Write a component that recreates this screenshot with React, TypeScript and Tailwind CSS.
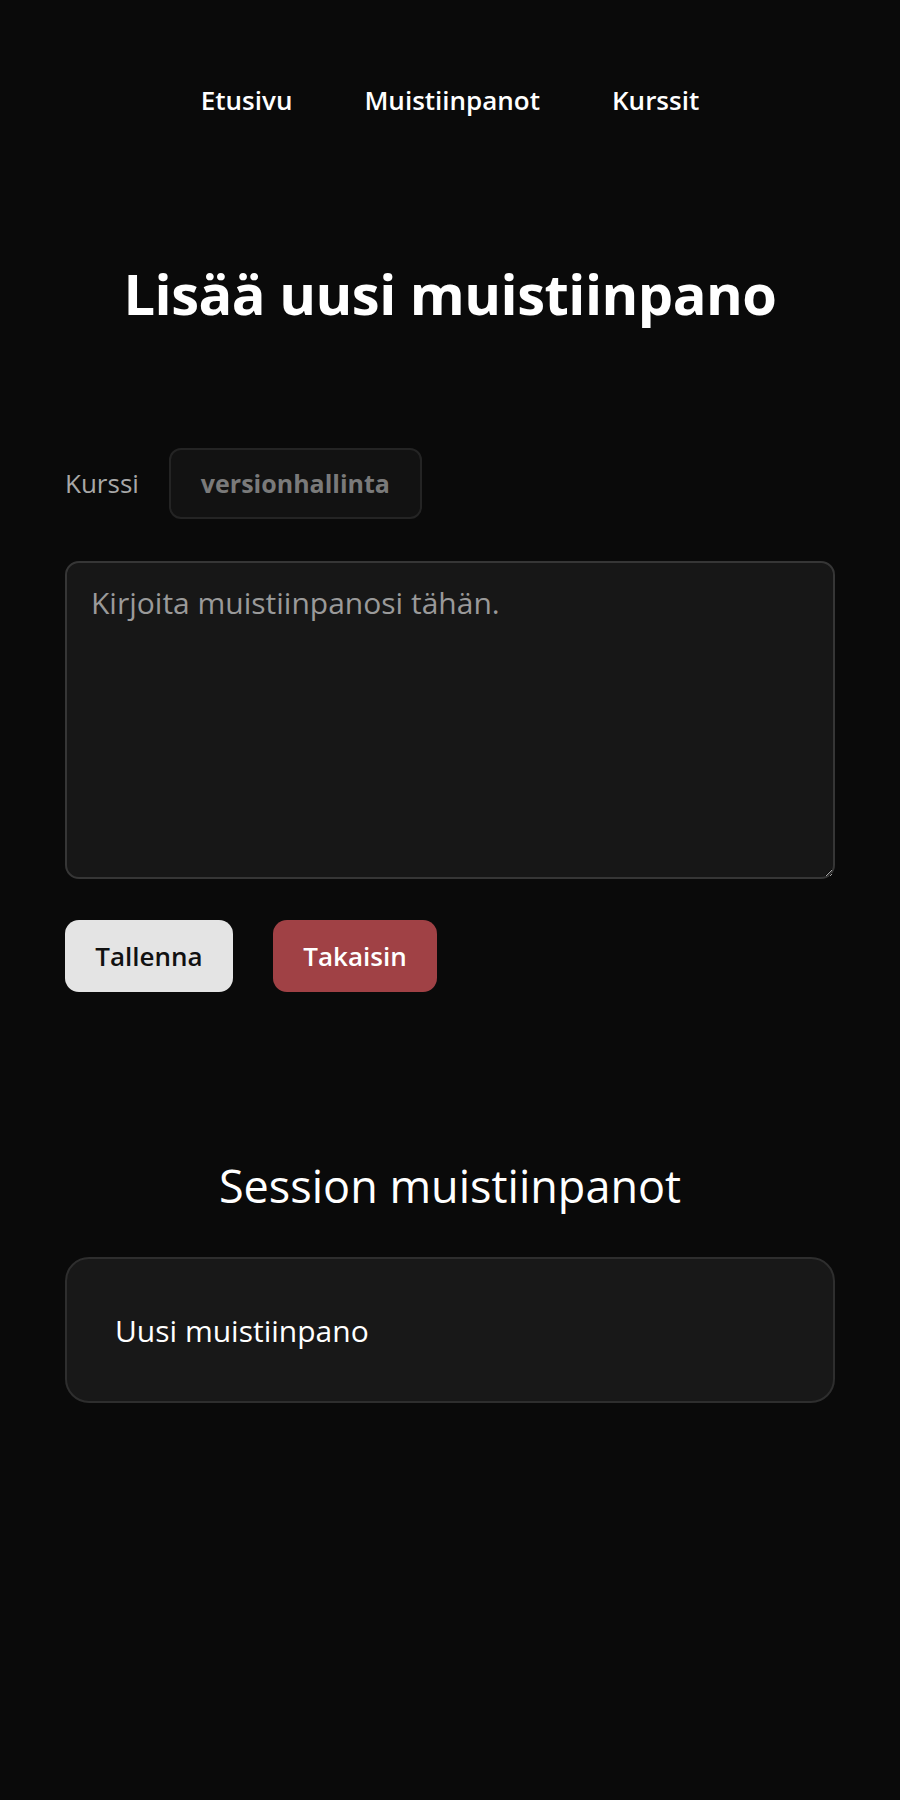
import type { FC } from 'react';

const navLinks = ['Etusivu', 'Muistiinpanot', 'Kurssit'];

const sessionNotes = ['Uusi muistiinpano'];

const App: FC = () => {
  return (
    <div className="min-h-[1800px] bg-[#0a0a0a] text-white font-['Open_Sans',sans-serif]">
      <nav className="flex justify-center gap-[72px] pt-[80px]">
        {navLinks.map((link) => (
          <a key={link} href="#" className="text-[26px] leading-[40px] font-semibold text-white">
            {link}
          </a>
        ))}
      </nav>

      <main className="mx-auto w-[770px]">
        <h1 className="mt-[137px] text-center text-[56px] leading-[72px] font-bold tracking-[-0.5px]">
          Lisää uusi muistiinpano
        </h1>

        <div className="mt-[119px] flex items-center gap-[30px]">
          <span className="text-[26px] text-[#a8a8a8]">Kurssi</span>
          <div className="flex h-[71px] items-center rounded-[12px] border-2 border-[#242424] bg-[#121212] px-[30px] text-[25px] font-bold text-[#7a7a7a]">
            versionhallinta
          </div>
        </div>

        <textarea
          placeholder="Kirjoita muistiinpanosi tähän."
          className="mt-[42px] block h-[318px] w-full rounded-[14px] border-2 border-[#363636] bg-[#171717] px-[24px] py-[17px] text-[30px] text-white placeholder:text-[#9a9a9a] outline-none"
        />

        <div className="mt-[41px] flex gap-[40px]">
          <button className="h-[72px] w-[168px] rounded-[14px] bg-[#e4e4e4] text-[26px] font-semibold text-[#111]">
            Tallenna
          </button>
          <button className="h-[72px] w-[164px] rounded-[14px] bg-[#a04145] text-[26px] font-semibold text-white">
            Takaisin
          </button>
        </div>

        <section className="mt-[166px]">
          <h2 className="text-center text-[45px] leading-[56px] font-normal">Session muistiinpanot</h2>
          <div className="mt-[43px] flex flex-col gap-4">
            {sessionNotes.map((note, index) => (
              <div
                key={index}
                className="flex h-[146px] items-center rounded-[24px] border-2 border-[#2e2e2e] bg-[#181818] px-[48px] text-[30px]"
              >
                {note}
              </div>
            ))}
          </div>
        </section>
      </main>
    </div>
  );
};

export default App;
